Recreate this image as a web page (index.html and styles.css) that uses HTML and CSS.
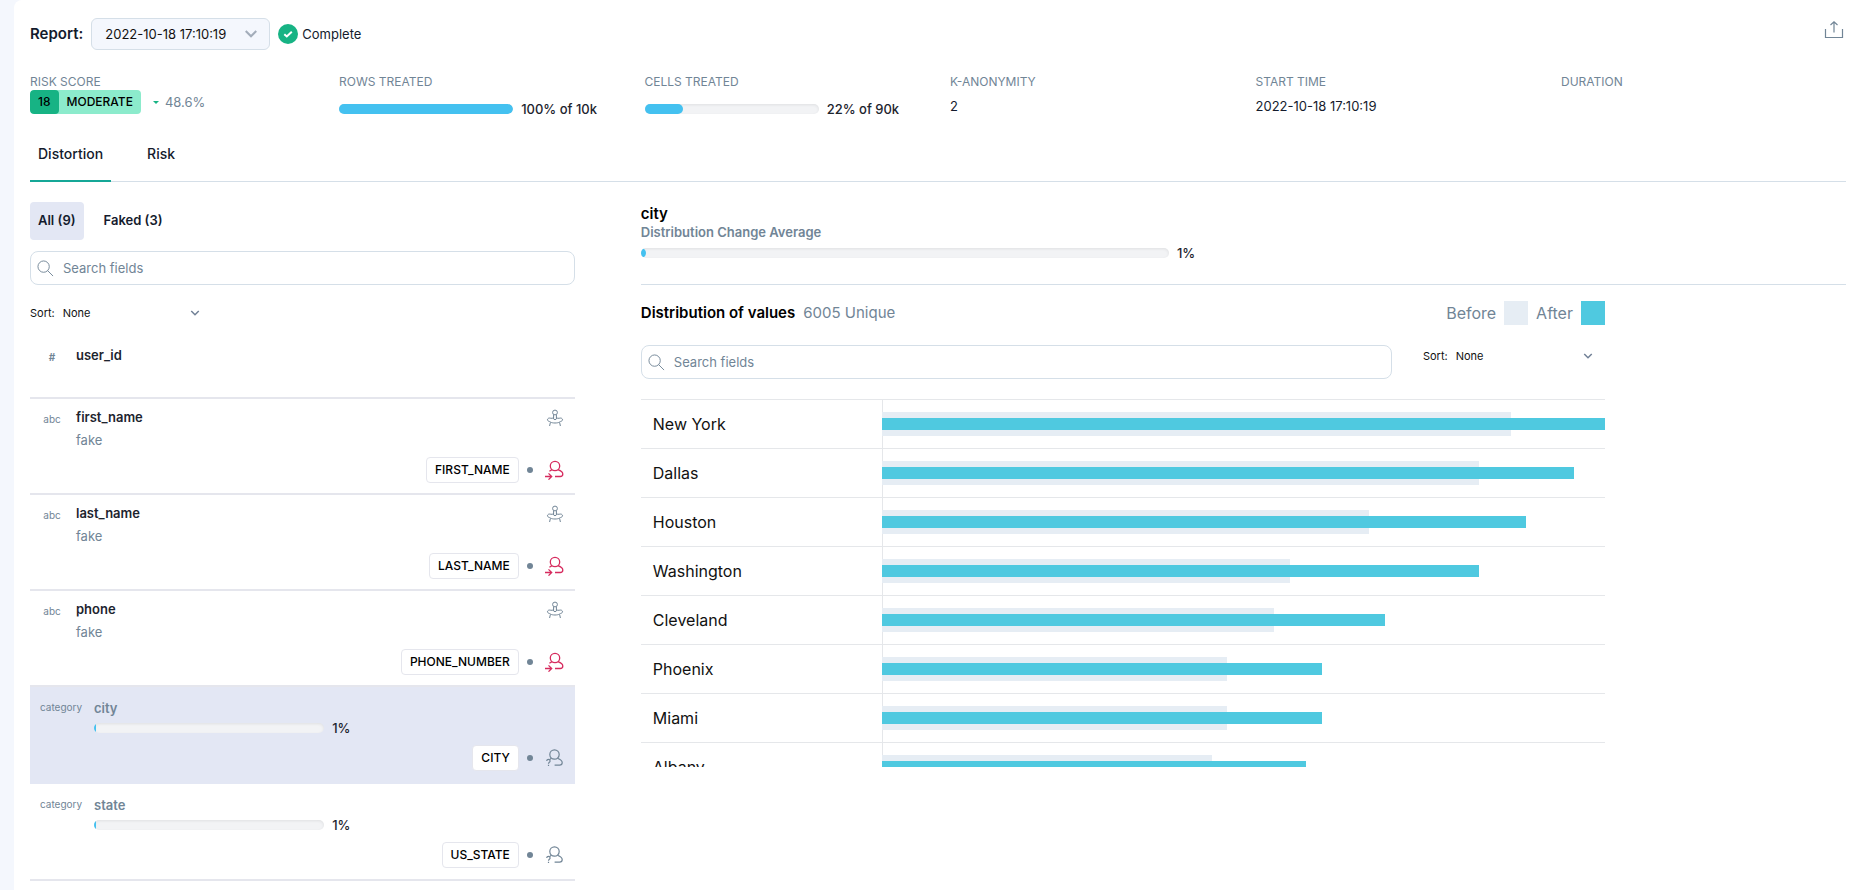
FILE: index.html
```html
<!DOCTYPE html>
<html lang="en">
<head>
<meta charset="utf-8">
<title>Transform report</title>
<link rel="stylesheet" href="styles.css">
</head>
<body>
<svg class="sprite" aria-hidden="true">
  <symbol id="chevron" viewBox="0 0 12 12"><path d="M1.500 3.500 6 8l4.500-4.500" fill="none" stroke="currentColor" stroke-width="1.800"/></symbol>
  <symbol id="search" viewBox="0 0 18 18"><circle cx="7" cy="7" r="6" fill="none" stroke="currentColor"/><path d="M11.200 11.200 17 17" stroke="currentColor"/></symbol>
  <symbol id="stamp" viewBox="0 0 18 18"><g fill="none" stroke="currentColor"><circle cx="9" cy="3.500" r="2.400"/><path d="M7.600 5.800v4.200c0 .8 2.800.8 2.800 0V5.800M7.600 8.800C5.500 10 4 8.600 2.600 9.200 1 10 1.200 11.600 2.600 12.200c1.600.3 2 1.800 6.400 1.800s4.800-1.500 6.400-1.800c1.400-.6 1.600-2.200 0-3-1.400-.6-2.900.8-5-.4M4.400 13.400 3.600 17M13.600 13.400l.8 3.600"/></g></symbol>
  <symbol id="user-arrow" viewBox="0 0 20 20"><g fill="none" stroke="currentColor" stroke-width="1.300"><circle cx="11" cy="6" r="4.700"/><path d="M8 9.600 5.400 11.200M14 9.600c2.500 1 4.800 2.100 4.800 4.400 0 1.700-1 2.500-2.600 2.500H11M1 16.500h6.500M4.500 13.400l3.200 3.100-3.200 3.100"/></g></symbol>
  <symbol id="user-question" viewBox="0 0 20 20"><g fill="none" stroke="currentColor" stroke-width="1.200"><circle cx="10.500" cy="6.500" r="4.700"/><path d="M7.500 10.200 6 11.200M13.500 10.200c2.500 1 4.700 2 4.700 4.300 0 1.700-1 2.600-2.600 2.600h-5M2.800 13c0-2.300 3.300-2.200 3.300 0 0 1.400-1.600 1.200-1.600 2.700M4.500 16.700v1.200"/></g></symbol>
</svg>
<main class="panel">
  <header class="report-bar">
    <label class="report-label" for="report">Report:</label>
    <span class="select-box report-select">
      <select id="report"><option>2022-10-18 17:10:19</option></select>
      <svg class="select-chevron" aria-hidden="true"><use href="#chevron"/></svg>
    </span>
    <span class="status">
      <svg class="status-icon" viewBox="0 0 20 20" aria-hidden="true"><circle cx="10" cy="10" r="10" fill="#17b384"/><path d="m6.300 10.200 2.500 2.300 5-4.800" fill="none" stroke="#fff" stroke-width="2"/></svg>
      Complete
    </span>
    <button class="export" aria-label="Export report">
      <svg viewBox="0 0 20 20" aria-hidden="true"><path d="M1.500 9v8.500h17V9M10 12.500V2.500M6.500 5 10 1.800 13.500 5" fill="none" stroke="currentColor" stroke-width="1.200"/></svg>
    </button>
  </header>

  <section class="stats">
    <div class="stat">
      <h2 class="stat-label">RISK SCORE</h2>
      <div class="risk">
        <span class="risk-badge"><span class="risk-score">18</span><span class="risk-level">MODERATE</span></span>
        <span class="risk-change"><i class="risk-arrow"></i>48.6%</span>
      </div>
    </div>
    <div class="stat">
      <h2 class="stat-label">ROWS TREATED</h2>
      <div class="meter stat-meter"><span class="track"><span class="fill" style="width:100%"></span></span>100% of 10k</div>
    </div>
    <div class="stat">
      <h2 class="stat-label">CELLS TREATED</h2>
      <div class="meter stat-meter"><span class="track"><span class="fill" style="width:22%"></span></span>22% of 90k</div>
    </div>
    <div class="stat"><h2 class="stat-label">K-ANONYMITY</h2><p class="stat-value">2</p></div>
    <div class="stat"><h2 class="stat-label">START TIME</h2><p class="stat-value">2022-10-18 17:10:19</p></div>
    <div class="stat"><h2 class="stat-label">DURATION</h2></div>
  </section>

  <nav class="tabs">
    <button class="tab tab-active">Distortion</button>
    <button class="tab">Risk</button>
  </nav>

  <div class="columns">
    <section class="fields">
      <div class="filters">
        <button class="filter filter-active">All (9)</button>
        <button class="filter">Faked (3)</button>
      </div>
      <div class="search">
        <svg class="search-icon" aria-hidden="true"><use href="#search"/></svg>
        <input type="text" placeholder="Search fields" aria-label="Search fields">
      </div>
      <div class="sort field-sort">
        <label for="field-sort">Sort:</label>
        <span class="select-box sort-select">
          <select id="field-sort"><option>None</option></select>
          <svg class="select-chevron" aria-hidden="true"><use href="#chevron"/></svg>
        </span>
      </div>
      <ul class="field-list">
        <li class="field field-plain">
          <span class="type type-number">#</span>
          <h3 class="field-name">user_id</h3>
        </li>
        <li class="field">
          <span class="type">abc</span>
          <div class="field-main"><h3 class="field-name">first_name</h3><p class="field-method">fake</p></div>
          <svg class="stamp" aria-hidden="true"><use href="#stamp"/></svg>
          <div class="field-foot"><span class="tag">FIRST_NAME</span><i class="dot"></i><svg class="person person-direct" aria-hidden="true"><use href="#user-arrow"/></svg></div>
        </li>
        <li class="field">
          <span class="type">abc</span>
          <div class="field-main"><h3 class="field-name">last_name</h3><p class="field-method">fake</p></div>
          <svg class="stamp" aria-hidden="true"><use href="#stamp"/></svg>
          <div class="field-foot"><span class="tag">LAST_NAME</span><i class="dot"></i><svg class="person person-direct" aria-hidden="true"><use href="#user-arrow"/></svg></div>
        </li>
        <li class="field">
          <span class="type">abc</span>
          <div class="field-main"><h3 class="field-name">phone</h3><p class="field-method">fake</p></div>
          <svg class="stamp" aria-hidden="true"><use href="#stamp"/></svg>
          <div class="field-foot"><span class="tag">PHONE_NUMBER</span><i class="dot"></i><svg class="person person-direct" aria-hidden="true"><use href="#user-arrow"/></svg></div>
        </li>
        <li class="field field-category field-selected">
          <span class="type">category</span>
          <div class="field-main"><h3 class="field-name">city</h3><div class="meter field-meter"><span class="track"><span class="fill" style="width:1%"></span></span>1%</div></div>
          <div class="field-foot"><span class="tag">CITY</span><i class="dot"></i><svg class="person" aria-hidden="true"><use href="#user-question"/></svg></div>
        </li>
        <li class="field field-category">
          <span class="type">category</span>
          <div class="field-main"><h3 class="field-name">state</h3><div class="meter field-meter"><span class="track"><span class="fill" style="width:1%"></span></span>1%</div></div>
          <div class="field-foot"><span class="tag">US_STATE</span><i class="dot"></i><svg class="person" aria-hidden="true"><use href="#user-question"/></svg></div>
        </li>
      </ul>
    </section>

    <section class="detail">
      <header class="detail-head">
        <h2 class="detail-title">city</h2>
        <p class="detail-sub">Distribution Change Average</p>
        <div class="meter detail-meter"><span class="track"><span class="fill" style="width:1%"></span></span>1%</div>
      </header>
      <div class="distribution">
        <div class="dist-head">
          <h2 class="dist-title">Distribution of values</h2>
          <span class="dist-count">6005 Unique</span>
          <span class="legend">Before<i class="swatch swatch-before"></i>After<i class="swatch swatch-after"></i></span>
        </div>
        <div class="dist-tools">
          <div class="search">
            <svg class="search-icon" aria-hidden="true"><use href="#search"/></svg>
            <input type="text" placeholder="Search fields" aria-label="Search values">
          </div>
          <div class="sort">
            <label for="value-sort">Sort:</label>
            <span class="select-box sort-select">
              <select id="value-sort"><option>None</option></select>
              <svg class="select-chevron" aria-hidden="true"><use href="#chevron"/></svg>
            </span>
          </div>
        </div>
        <ul class="chart">
          <li class="chart-row"><span class="chart-label">New York</span><span class="bars"><i class="before" style="width:87%"></i><i class="after" style="width:100%"></i></span></li>
          <li class="chart-row"><span class="chart-label">Dallas</span><span class="bars"><i class="before" style="width:82.600%"></i><i class="after" style="width:95.700%"></i></span></li>
          <li class="chart-row"><span class="chart-label">Houston</span><span class="bars"><i class="before" style="width:67.400%"></i><i class="after" style="width:89.100%"></i></span></li>
          <li class="chart-row"><span class="chart-label">Washington</span><span class="bars"><i class="before" style="width:56.500%"></i><i class="after" style="width:82.600%"></i></span></li>
          <li class="chart-row"><span class="chart-label">Cleveland</span><span class="bars"><i class="before" style="width:54.300%"></i><i class="after" style="width:69.600%"></i></span></li>
          <li class="chart-row"><span class="chart-label">Phoenix</span><span class="bars"><i class="before" style="width:47.800%"></i><i class="after" style="width:60.900%"></i></span></li>
          <li class="chart-row"><span class="chart-label">Miami</span><span class="bars"><i class="before" style="width:47.800%"></i><i class="after" style="width:60.900%"></i></span></li>
          <li class="chart-row"><span class="chart-label">Albany</span><span class="bars"><i class="before" style="width:45.700%"></i><i class="after" style="width:58.700%"></i></span></li>
        </ul>
      </div>
    </section>
  </div>
</main>
</body>
</html>
```

FILE: styles.css
```css
* { box-sizing: border-box; }
body {
  margin: 0;
  padding-left: 14px;
  background: #f4f7fd;
  color: #141b2d;
  font: 13px/16px Inter, "Liberation Sans", sans-serif;
}
h2, h3, p, ul { margin: 0; padding: 0; font: inherit; }
ul { list-style: none; }
button, input, select { font: inherit; color: inherit; border: 0; background: none; padding: 0; margin: 0; }
svg { display: block; }
.sprite { position: absolute; width: 0; height: 0; }
.panel {
  min-height: 100vh;
  padding: 18px 12px 0 16px;
  background: #fff;
  border-top-left-radius: 8px;
}

/* Selects */
.select-box { position: relative; display: inline-block; color: #718096; }
.select-box select { appearance: none; width: 100%; color: #111; }
.select-chevron { position: absolute; pointer-events: none; }

/* Report bar */
.report-bar { display: flex; align-items: center; gap: 8px; }
.report-label { font-size: 15px; font-weight: 600; }
.report-select { width: 179px; color: #a3adba; }
.report-select select {
  height: 32px;
  padding: 0 13px;
  border: 1px solid #d5dfe8;
  border-radius: 6px;
  background: #f4f7fd;
}
.report-select .select-chevron { right: 12px; top: 9px; width: 14px; height: 14px; }
.status { display: flex; align-items: center; gap: 4px; }
.status-icon { width: 20px; height: 20px; }
.export { margin-left: auto; align-self: flex-start; padding-top: 2px; color: #718596; }
.export svg { width: 20px; height: 20px; margin-right: 2px; }

/* Meters */
.meter { display: flex; align-items: center; gap: 8px; font-weight: 500; color: #1d242e; white-space: nowrap; }
.track {
  flex: 1;
  height: 10px;
  border-radius: 5px;
  overflow: hidden;
  background: #f2f3f5;
  box-shadow: inset 0 1px 3px rgba(0, 0, 0, .08);
}
.fill { display: block; height: 100%; border-radius: 0 5px 5px 0; background: #44c1f0; }

/* Stats */
.stats { display: grid; grid-template-columns: 618fr repeat(4, 611fr) 570fr; padding-top: 24px; height: 80px; }
.stat-label { font-size: 12px; color: #718596; }
.stat-value { padding-top: 8px; }
.stat-meter { padding-top: 11px; }
.stat-meter .track { flex: 0 0 57%; }
.risk { display: flex; align-items: center; gap: 12px; }
.risk-badge { display: flex; height: 24px; border-radius: 4px; overflow: hidden; background: #8cebcc; color: #000; font-size: 12px; line-height: 24px; font-weight: 500; }
.risk-score { padding: 0 8px; background: #17b384; border-radius: 4px; }
.risk-level { padding: 0 8px; }
.risk-change { display: flex; align-items: center; gap: 6px; color: #718596; }
.risk-arrow { border: 3px solid transparent; border-top-color: #17b384; border-bottom: 0; }

/* Tabs */
.tabs { display: flex; gap: 28px; border-bottom: 1px solid #d5dfe8; }
.tab { height: 52px; padding: 0 8px 2px; margin-bottom: -1px; border-bottom: 2px solid transparent; font-size: 14px; font-weight: 500; }
.tab-active { border-color: #15a797; }

.columns { display: flex; gap: 66px; }
.fields { flex: 0 0 30%; padding-top: 20px; }
.detail { flex: 1; padding-top: 23px; }

/* Search and sort */
.search { position: relative; flex: 1; color: #718596; }
.search input { width: 100%; height: 34px; padding: 0 32px; border: 1px solid #d5dfe8; border-radius: 8px; }
.search input::placeholder { color: #718596; opacity: 1; }
.search-icon { position: absolute; left: 7px; top: 9px; width: 17px; height: 17px; }
.sort { display: flex; gap: 8px; font-size: 11px; color: #111; }
.sort-select { width: 140px; }
.sort-select .select-chevron { right: 3px; top: 3px; width: 10px; height: 10px; }

/* Field list */
.filters { display: flex; gap: 12px; padding-bottom: 11px; }
.filter { height: 38px; padding: 0 8px 2px; border-radius: 4px; font-weight: 600; }
.filter-active { background: #e3e7f4; }
.field-sort { padding: 20px 0 14px; }
.field {
  display: grid;
  grid-template: 48px 1fr / 36px 1fr auto;
  column-gap: 10px;
  align-items: start;
  height: 96px;
  padding: 10px 11px 10px 0;
  border-bottom: 2px solid #e5e6ed;
}
.field-plain { height: 64px; padding-top: 12px; }
.type { padding: 2px 0 0 8px; text-align: center; font-size: 10px; color: #718596; }
.type-number { font-weight: 700; }
.field-name { font-weight: 600; color: #1d242e; }
.field-method { padding-top: 7px; color: #718596; }
.stamp { width: 18px; height: 18px; color: #718596; }
.field-foot { grid-column: 1 / -1; display: flex; align-items: center; justify-content: flex-end; gap: 8px; }
.tag { height: 26px; padding: 0 8px; border: 1px solid #e5e6ed; border-radius: 4px; background: #fff; color: #000; font-size: 12px; line-height: 24px; font-weight: 500; }
.dot { width: 6px; height: 6px; margin-right: 3px; border-radius: 3px; background: #718596; }
.person { width: 20px; height: 20px; color: #718596; }
.person-direct { color: #d62b5e; }
.field-category { grid-template-columns: 54px 1fr; height: 97px; }
.field-category .type { padding: 2px 0 0 10px; text-align: left; }
.field-category .field-name { color: #718596; padding-top: 3px; }
.field-meter { padding-top: 4px; }
.field-meter .track { flex: 0 0 49%; }
.field-selected { background: #e3e7f4; border-color: #e3e7f4; }

/* Detail */
.detail-head { padding-bottom: 23px; border-bottom: 1px solid #d5dfe8; }
.detail-title { font-size: 15px; line-height: 18px; font-weight: 600; color: #000; }
.detail-sub { line-height: 18px; font-weight: 600; color: #718596; }
.detail-meter { width: 46%; padding-top: 4px; }
.distribution { width: 80%; padding-top: 16px; }
.dist-head { display: flex; align-items: center; gap: 8px; font-size: 16px; color: #718596; }
.dist-title { font-size: 15px; font-weight: 600; color: #000; }
.dist-count { font-size: 15px; }
.legend { display: flex; align-items: center; gap: 8px; margin-left: auto; }
.swatch { width: 24px; height: 24px; }
.swatch-before, .before { background: #e6edf4; }
.swatch-after, .after { background: #4fc9e0; }
.dist-tools { display: flex; align-items: flex-start; gap: 31px; padding: 20px 0; }
.dist-tools .sort { width: 182px; padding-top: 3px; }
.dist-tools .sort-select { flex: 1; width: auto; padding-right: 9px; }
.dist-tools .select-chevron { right: 12px; }

/* Chart */
.chart { height: 368px; overflow: hidden; color: #111; font-size: 16px; }
.chart-row { display: grid; grid-template-columns: 25% 75%; align-items: center; height: 49px; border-top: 1px solid #e5e7ea; }
.chart-label { padding-left: 12px; }
.bars { display: grid; align-items: center; height: 100%; box-shadow: inset 1px 0 #e5e7ea; }
.bars i { grid-area: 1 / 1; }
.before { height: 24px; }
.after { height: 12px; }
```
